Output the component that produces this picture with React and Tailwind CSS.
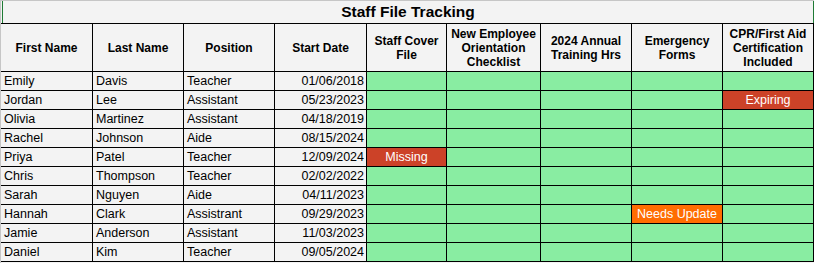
import React from "react";

const rows = [
  ["Emily", "Davis", "Teacher", "01/06/2018", null, null],
  ["Jordan", "Lee", "Assistant", "05/23/2023", 8, "Expiring"],
  ["Olivia", "Martinez", "Assistant", "04/18/2019", null, null],
  ["Rachel", "Johnson", "Aide", "08/15/2024", null, null],
  ["Priya", "Patel", "Teacher", "12/09/2024", 4, "Missing"],
  ["Chris", "Thompson", "Teacher", "02/02/2022", null, null],
  ["Sarah", "Nguyen", "Aide", "04/11/2023", null, null],
  ["Hannah", "Clark", "Assistrant", "09/29/2023", 7, "Needs Update"],
  ["Jamie", "Anderson", "Assistant", "11/03/2023", null, null],
  ["Daniel", "Kim", "Teacher", "09/05/2024", null, null],
];

const headers = [
  ["First Name"],
  ["Last Name"],
  ["Position"],
  ["Start Date"],
  ["Staff Cover", "File"],
  ["New Employee", "Orientation", "Checklist"],
  ["2024 Annual", "Training Hrs"],
  ["Emergency", "Forms"],
  ["CPR/First Aid", "Certification", "Included"],
];

export default function App() {
  return (
    <div
      className="w-[814px] h-[263px] bg-[#f3f3f3] border-t border-l border-[#c6c6c6] overflow-hidden text-black"
      style={{ fontFamily: '"Liberation Sans", Arial, sans-serif' }}
    >
      <div className="h-[22px] ml-px border-l border-r border-[#1f7a35] flex items-center justify-center font-bold text-[15.5px] leading-none">
        Staff File Tracking
      </div>
      <div className="grid grid-cols-[92px_91px_91px_92px_80px_94px_91px_91px_91px] border-t border-black">
        {headers.map((h, i) => (
          <div
            key={i}
            className="h-[48px] pt-px border-r border-b border-black flex flex-col items-center justify-center text-center font-bold text-[12px] leading-[14px] whitespace-nowrap"
          >
            {h.map((line, li) => (
              <span key={li}>{line}</span>
            ))}
          </div>
        ))}
        {rows.map((r, ri) => (
          <React.Fragment key={ri}>
            <div className="h-[19px] border-r border-b border-black text-[12.5px] leading-[18px] pl-[3px]">{r[0]}</div>
            <div className="h-[19px] border-r border-b border-black text-[12.5px] leading-[18px] pl-[3px]">{r[1]}</div>
            <div className="h-[19px] border-r border-b border-black text-[12.5px] leading-[18px] pl-[3px]">{r[2]}</div>
            <div className="h-[19px] border-r border-b border-black text-[12.5px] leading-[18px] pr-[2px] text-right">{r[3]}</div>
            {[4, 5, 6, 7, 8].map((c) => {
              const isStatus = r[4] === c;
              const bg = !isStatus
                ? "bg-[#89eda2]"
                : r[5] === "Needs Update"
                ? "bg-[#ff6d01]"
                : "bg-[#cc4228]";
              return (
                <div
                  key={c}
                  className={`h-[19px] border-r border-b border-black text-[12.5px] leading-[18px] text-center text-white ${bg}`}
                >
                  {isStatus ? r[5] : ""}
                </div>
              );
            })}
          </React.Fragment>
        ))}
      </div>
    </div>
  );
}
